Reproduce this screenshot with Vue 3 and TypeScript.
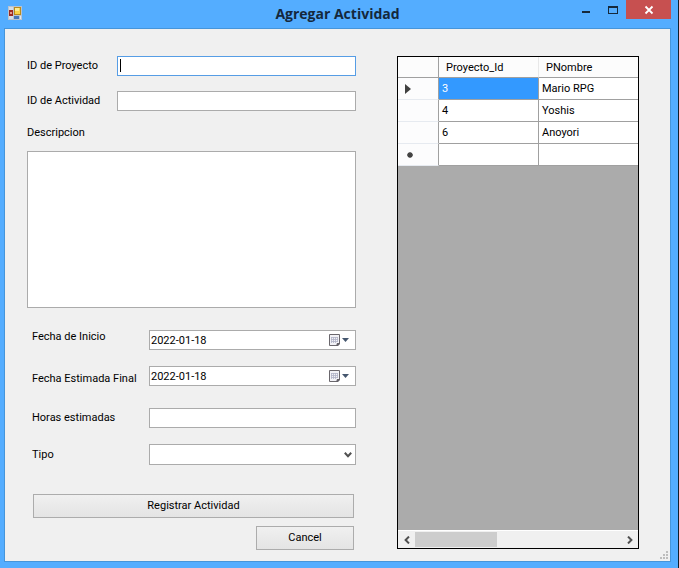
<script setup lang="ts">
import { ref } from 'vue'

interface Project {
  id: number
  name: string
}

const projects: Project[] = [
  { id: 3, name: 'Mario RPG' },
  { id: 4, name: 'Yoshis' },
  { id: 6, name: 'Anoyori' },
]

const projectId = ref('')
const activityId = ref('')
const description = ref('')
const startDate = ref('2022-01-18')
const endDate = ref('2022-01-18')
const hours = ref('')
const kind = ref('')
const selected = ref(3)
</script>

<template>
  <div class="window">
    <header class="titlebar">
      <svg class="app-icon" viewBox="0 0 14 14" aria-hidden="true">
        <rect width="14" height="14" fill="#b9c3cf" />
        <rect x="1" y="1" width="4" height="3" fill="#d5dde6" />
        <rect x="1" y="10" width="4" height="3" fill="#d5dde6" />
        <rect x="1" y="4" width="4" height="6" fill="#9c2a22" />
        <rect x="2" y="6" width="2" height="2" fill="#e59a8c" />
        <rect x="6" y="1" width="7" height="8" fill="#b98a1c" />
        <rect x="7" y="2" width="5" height="6" fill="#f8d34a" />
        <rect x="7" y="2" width="4" height="3" fill="#fdeb92" />
        <rect x="6" y="10" width="5" height="3" fill="#4676b8" />
        <rect x="12" y="10" width="1" height="3" fill="#e4e9ef" />
      </svg>
      <h1>Agregar Actividad</h1>
      <div class="controls">
        <button type="button" class="ctl" aria-label="Minimizar">
          <svg viewBox="0 0 10 10"><rect x="1" y="6" width="8" height="2" fill="#16293c" /></svg>
        </button>
        <button type="button" class="ctl" aria-label="Maximizar">
          <svg viewBox="0 0 10 10">
            <path d="M0 1H10V9H0ZM1 3V8H9V3Z" fill="#16293c" fill-rule="evenodd" />
          </svg>
        </button>
        <button type="button" class="ctl close" aria-label="Cerrar">
          <svg viewBox="0 0 10 10"><path d="M1.500 1.500L8.500 8.500M8.500 1.500L1.500 8.500" stroke="#fff" stroke-width="1.800" /></svg>
        </button>
      </div>
    </header>

    <main class="client">
      <form class="form" @submit.prevent>
        <div class="row wide">
          <label for="project">ID de Proyecto</label>
          <div class="field">
            <input id="project" v-model="projectId" class="active" type="text" />
            <span class="caret"></span>
          </div>
        </div>
        <div class="row wide">
          <label for="activity">ID de Actividad</label>
          <input id="activity" v-model="activityId" type="text" />
        </div>
        <label class="desc-label" for="description">Descripcion</label>
        <textarea id="description" v-model="description"></textarea>

        <div class="details">
          <div class="row">
            <label class="high" for="start">Fecha de Inicio</label>
            <div class="field">
              <input id="start" v-model="startDate" type="text" />
              <button type="button" class="picker" aria-label="Elegir fecha de inicio">
                <svg viewBox="0 0 22 12">
                  <path d="M.5 .5H10.500V9.500L8.500 11.500H.5Z" fill="#f2f2f6" stroke="#6a676c" />
                  <path d="M2 3.500H9M2 5.500H9M2 7.500H9M2.500 3V9M4.500 3V9M6.500 3V9M8.500 3V8" stroke="#b0b2c6" stroke-width=".8" />
                  <path d="M7 12L8 9H11V10L9 12Z" fill="#66636a" />
                  <path d="M13 4H20L16.500 8Z" fill="#45566e" />
                </svg>
              </button>
            </div>
          </div>
          <div class="row">
            <label class="low" for="end">Fecha Estimada Final</label>
            <div class="field">
              <input id="end" v-model="endDate" type="text" />
              <button type="button" class="picker" aria-label="Elegir fecha final">
                <svg viewBox="0 0 22 12">
                  <path d="M.5 .5H10.500V9.500L8.500 11.500H.5Z" fill="#f2f2f6" stroke="#6a676c" />
                  <path d="M2 3.500H9M2 5.500H9M2 7.500H9M2.500 3V9M4.500 3V9M6.500 3V9M8.500 3V8" stroke="#b0b2c6" stroke-width=".8" />
                  <path d="M7 12L8 9H11V10L9 12Z" fill="#66636a" />
                  <path d="M13 4H20L16.500 8Z" fill="#45566e" />
                </svg>
              </button>
            </div>
          </div>
          <div class="row hours">
            <label for="hours">Horas estimadas</label>
            <input id="hours" v-model="hours" type="text" />
          </div>
          <div class="row">
            <label for="kind">Tipo</label>
            <div class="field">
              <select id="kind" v-model="kind">
                <option value=""></option>
              </select>
              <svg class="chevron" viewBox="0 0 8 6" aria-hidden="true">
                <path d="M.8 .8L4 4.200L7.200 .8" fill="none" stroke="#505050" stroke-width="2" />
              </svg>
            </div>
          </div>
        </div>

        <div class="actions">
          <button type="submit" class="btn">Registrar Actividad</button>
          <button type="button" class="btn cancel">Cancel</button>
        </div>
      </form>

      <section class="datagrid">
        <table>
          <colgroup>
            <col class="c-head" />
            <col class="c-id" />
            <col />
          </colgroup>
          <thead>
            <tr>
              <th></th>
              <th scope="col">Proyecto_Id</th>
              <th scope="col">PNombre</th>
            </tr>
          </thead>
          <tbody>
            <tr v-for="(p, i) in projects" :key="p.id" @click="selected = p.id">
              <th scope="row">
                <svg v-if="i === 0" class="marker" viewBox="0 0 6 10"><path d="M0 0L6 5L0 10Z" fill="#404040" /></svg>
              </th>
              <td :class="{ selected: selected === p.id }">{{ p.id }}</td>
              <td>{{ p.name }}</td>
            </tr>
            <tr>
              <th scope="row">
                <svg class="marker star" viewBox="0 0 6 6">
                  <path d="M3 0V6M0 3H6M1 1L5 5M5 1L1 5" stroke="#404040" stroke-width="1.400" />
                </svg>
              </th>
              <td></td>
              <td></td>
            </tr>
          </tbody>
        </table>
        <div class="scrollbar">
          <button type="button" aria-label="Desplazar a la izquierda">
            <svg viewBox="0 0 6 8"><path d="M5 .6L1.600 4L5 7.400" fill="none" stroke="#505050" stroke-width="2" /></svg>
          </button>
          <div class="track"><div class="thumb"></div></div>
          <button type="button" aria-label="Desplazar a la derecha">
            <svg viewBox="0 0 6 8"><path d="M1 .6L4.400 4L1 7.400" fill="none" stroke="#505050" stroke-width="2" /></svg>
          </button>
        </div>
      </section>

      <svg class="grip" viewBox="0 0 8 8" aria-hidden="true">
        <path d="M6 0h2v2h-2zM3 3h2v2h-2zM6 3h2v2h-2zM0 6h2v2h-2zM3 6h2v2h-2zM6 6h2v2h-2z" fill="#bdbdbd" />
      </svg>
    </main>
  </div>
</template>

<style>
body {
  background: #54adff;
}
</style>

<style scoped>
* {
  box-sizing: border-box;
}
.window {
  min-height: 100vh;
  display: flex;
  flex-direction: column;
  padding: 0 7px 6px 4px;
  background: #54adff;
  border-right: 1px solid #10202e;
  font: 11px/14px Roboto, "Liberation Sans", sans-serif;
  color: #000;
}
.titlebar {
  display: grid;
  grid-template-columns: 1fr auto 1fr;
  align-items: start;
  height: 28px;
}
.app-icon {
  width: 14px;
  height: 14px;
  margin: 6px 4px;
}
h1 {
  margin: 0;
  font: 700 14px/28px "Open Sans", "Noto Sans", sans-serif;
  color: #14283c;
}
.controls {
  display: flex;
  justify-content: flex-end;
}
.ctl {
  display: flex;
  align-items: center;
  justify-content: center;
  width: 27px;
  height: 19px;
  padding: 0;
  border: 0;
  background: none;
}
.ctl svg {
  width: 10px;
  height: 10px;
}
.close {
  width: 45px;
  background: #c75050;
}
.client {
  position: relative;
  flex: 1;
  display: grid;
  grid-template-columns: 329fr 242fr;
  gap: 41px;
  padding: 27px 31px 11px 22px;
  background: #f0f0f0;
  border: 1px solid #4695da;
}
.form {
  display: flex;
  flex-direction: column;
}
.row {
  display: grid;
  grid-template-columns: 117px 1fr;
  align-items: center;
}
.row.wide {
  grid-template-columns: 90px 1fr;
  margin-bottom: 15px;
}
label {
  white-space: nowrap;
}
.high {
  align-self: start;
}
.low {
  align-self: end;
}
.field {
  position: relative;
  display: grid;
}
input,
select,
textarea {
  width: 100%;
  height: 20px;
  margin: 0;
  padding: 0 1px;
  border: 1px solid #ababab;
  border-radius: 0;
  background: #fff;
  color: #000;
  font: inherit;
  outline: none;
}
input.active {
  border-color: #569de5;
}
select {
  appearance: none;
  height: 21px;
}
textarea {
  display: block;
  flex: 1;
  min-height: 157px;
  resize: none;
}
.caret {
  position: absolute;
  left: 3px;
  top: 3px;
  width: 1px;
  height: 13px;
  background: #000;
}
.desc-label {
  margin-bottom: 11px;
}
.details {
  display: grid;
  gap: 16px;
  padding: 22px 0 0 5px;
}
.hours {
  margin-top: 6px;
}
.picker {
  position: absolute;
  right: 5px;
  top: 4px;
  padding: 0;
  border: 0;
  background: none;
  line-height: 0;
}
.picker svg {
  width: 22px;
  height: 12px;
}
.chevron {
  position: absolute;
  right: 4px;
  top: 8px;
  width: 8px;
  height: 6px;
  pointer-events: none;
}
.actions {
  display: grid;
  gap: 8px;
  padding: 29px 2px 0 6px;
}
.btn {
  height: 24px;
  padding: 0;
  border: 1px solid #acacac;
  background: linear-gradient(#f0f0f0, #e4e4e4);
  color: #000;
  font: inherit;
}
.cancel {
  justify-self: end;
  width: 98px;
}
.datagrid {
  display: flex;
  flex-direction: column;
  margin-bottom: 1px;
  border: 1px solid #000;
  background: #ababab;
}
table {
  width: 100%;
  table-layout: fixed;
  border-collapse: separate;
  border-spacing: 0;
}
.c-head {
  width: 41px;
}
.c-id {
  width: 100px;
}
th,
td {
  height: 22px;
  padding: 0 3px;
  border-right: 1px solid #a0a0a0;
  border-bottom: 1px solid #a0a0a0;
  background: #fff;
  font-weight: 400;
  text-align: left;
}
tr > :last-child {
  border-right: 0;
}
thead th {
  height: 21px;
  padding: 1px 7px 0;
  background: #fcfcfc;
}
thead th + th {
  border-right-color: #e8e8e8;
}
tbody th {
  padding: 0 7px;
  border-bottom-color: #e6eaf0;
  background: #fcfcfd;
}
td.selected {
  background: #3399ff;
  color: #fff;
}
.marker {
  display: block;
  width: 6px;
  height: 10px;
}
.star {
  margin-left: 2px;
  height: 6px;
}
.scrollbar {
  display: flex;
  height: 18px;
  margin-top: auto;
  padding: 1px 0;
  border-top: 1px solid #fff;
  background: #f0f0f0;
}
.scrollbar button {
  display: flex;
  align-items: center;
  justify-content: center;
  width: 17px;
  padding: 0;
  border: 0;
  background: none;
}
.scrollbar svg {
  width: 6px;
  height: 8px;
}
.track {
  flex: 1;
}
.thumb {
  width: 40%;
  height: 100%;
  background: #cdcdcd;
}
.grip {
  position: absolute;
  right: 2px;
  bottom: 2px;
  width: 8px;
  height: 8px;
}
</style>
